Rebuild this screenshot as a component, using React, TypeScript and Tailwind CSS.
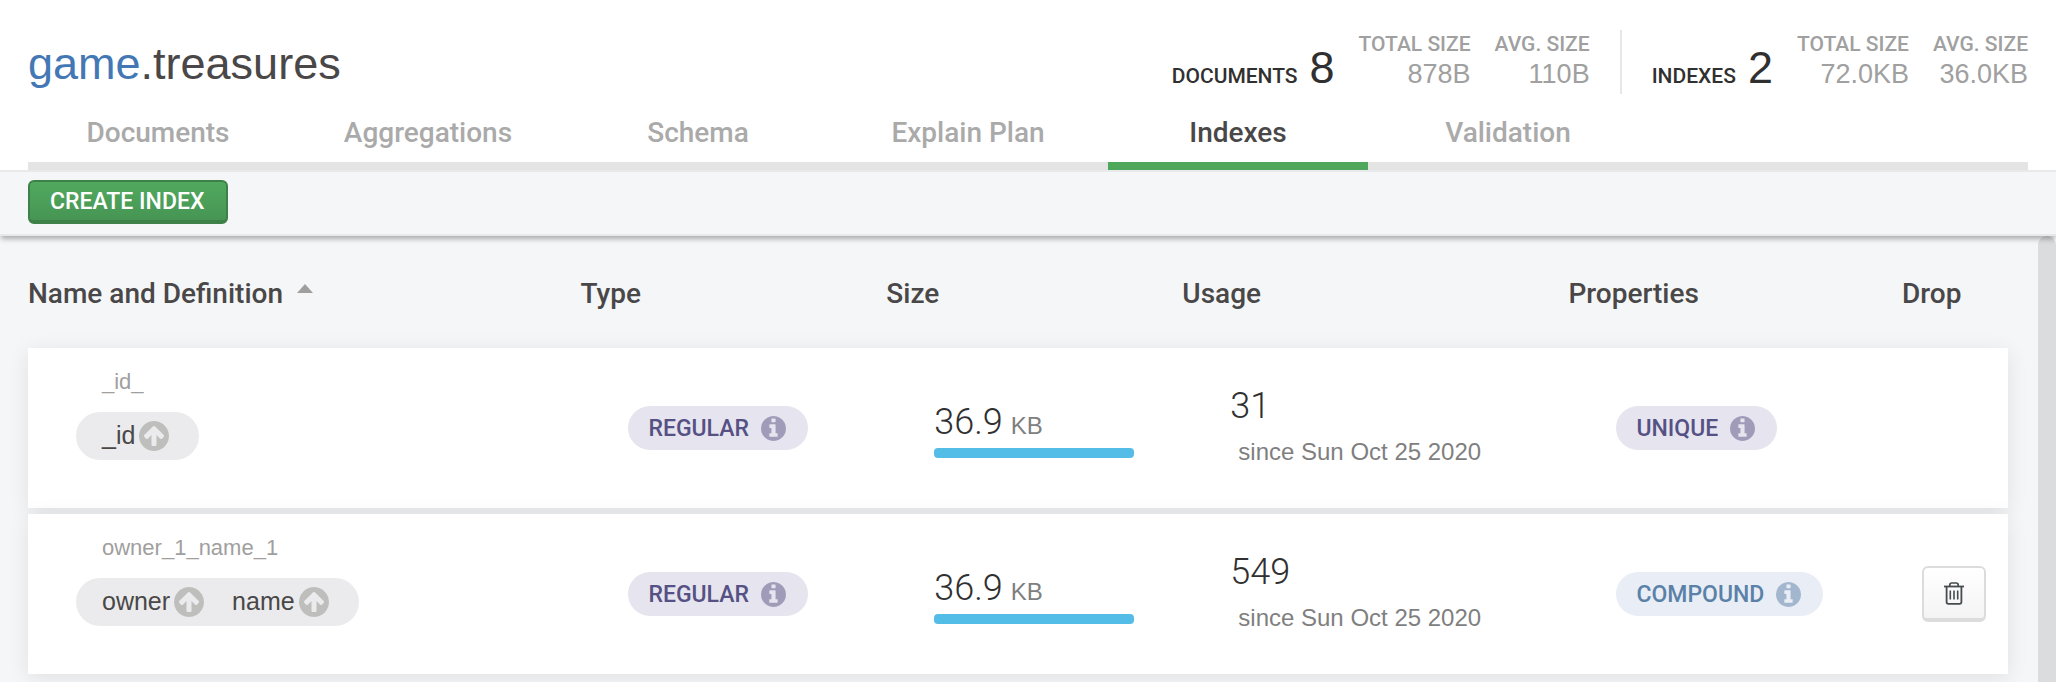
import React from 'react';

type Tone = 'violet' | 'blue';

interface IndexRow {
  name: string;
  fields: string[];
  size: string;
  unit: string;
  usage: number;
  since: string;
  property: string;
  tone: Tone;
  droppable: boolean;
}

const tabs = ['Documents', 'Aggregations', 'Schema', 'Explain Plan', 'Indexes', 'Validation'];

const rows: IndexRow[] = [
  {
    name: '_id_',
    fields: ['_id'],
    size: '36.9',
    unit: 'KB',
    usage: 31,
    since: 'since Sun Oct 25 2020',
    property: 'UNIQUE',
    tone: 'violet',
    droppable: false,
  },
  {
    name: 'owner_1_name_1',
    fields: ['owner', 'name'],
    size: '36.9',
    unit: 'KB',
    usage: 549,
    since: 'since Sun Oct 25 2020',
    property: 'COMPOUND',
    tone: 'blue',
    droppable: true,
  },
];

const MEDIUM = "font-['Roboto',sans-serif] font-medium";

function Stat({ label, value }: { label: string; value: string }) {
  return (
    <div className="flex flex-col items-end text-[#a0a0a0]">
      <span className={`${MEDIUM} text-[21px] leading-[28px]`}>{label}</span>
      <span className="text-[27px] leading-[32px]">{value}</span>
    </div>
  );
}

function StatGroup({ label, count, total, avg }: { label: string; count: number; total: string; avg: string }) {
  return (
    <div className="flex gap-6 pt-1 [align-items:last_baseline]">
      <div className="flex items-baseline gap-3 leading-[44px] text-[#313030]">
        <span className={`${MEDIUM} text-[21px]`}>{label}</span>
        <span className="text-[45px]">{count}</span>
      </div>
      <Stat label="TOTAL SIZE" value={total} />
      <Stat label="AVG. SIZE" value={avg} />
    </div>
  );
}

function InfoIcon({ className }: { className: string }) {
  return (
    <svg viewBox="128 128 1536 1536" className={className} fill="currentColor" aria-hidden="true">
      <path d="M1152 1376v-160q0-14-9-23t-23-9h-96v-512q0-14-9-23t-23-9h-320q-14 0-23 9t-9 23v160q0 14 9 23t23 9h96v320h-96q-14 0-23 9t-9 23v160q0 14 9 23t23 9h448q14 0 23-9t9-23zM1024 480v-160q0-14-9-23t-23-9h-192q-14 0-23 9t-9 23v160q0 14 9 23t23 9h192q14 0 23-9t9-23zM1664 896q0 209-103 385.5t-279.5 279.5-385.5 103-385.5-103-279.5-279.5-103-385.5 103-385.5 279.5-279.5 385.5-103 385.5 103 279.5 279.5 103 385.5z" />
    </svg>
  );
}

function ArrowUpIcon() {
  return (
    <svg viewBox="128 128 1536 1536" className="size-[30px] text-[#bebfbd]" fill="currentColor" aria-hidden="true">
      <path d="M1412 895q0-27-18-45l-362-362-91-91q-18-18-45-18t-45 18l-91 91-362 362q-18 18-18 45t18 45l91 91q18 18 45 18t45-18l189-189v502q0 26 19 45t45 19h128q26 0 45-19t19-45v-502l189 189q19 19 45 19t45-19l91-91q18-18 18-45zM1664 896q0 209-103 385.5t-279.5 279.5-385.5 103-385.5-103-279.5-279.5-103-385.5 103-385.5 279.5-279.5 385.5-103 385.5 103 279.5 279.5 103 385.5z" />
    </svg>
  );
}

function TrashIcon() {
  return (
    <svg viewBox="0 0 20 23" className="h-[23px] w-5" fill="none" stroke="#464c4f" aria-hidden="true">
      <path d="M0 4.5h20" strokeWidth="1.8" />
      <path d="M5.8 4.2V3q0-2 2-2h4.4q2 0 2 2v1.2" strokeWidth="1.7" />
      <path d="M2.6 4.8V20q0 1.8 1.8 1.8h11.2q1.8 0 1.8-1.8V4.8" strokeWidth="1.8" />
      <path d="M6.3 8.4v9.2M10 8.4v9.2M13.7 8.4v9.2" strokeWidth="1.6" />
    </svg>
  );
}

function Badge({ label, tone }: { label: string; tone: Tone }) {
  const colors = tone === 'violet' ? 'bg-[#e6e4ee] text-[#555184]' : 'bg-[#e9edf5] text-[#5a81a8]';
  const icon = tone === 'violet' ? 'text-[#9f9bb9]' : 'text-[#a2b7ce]';
  return (
    <span className={`inline-flex h-11 items-center gap-3 rounded-full pr-[22px] pl-5 align-middle ${MEDIUM} text-[23px] ${colors}`}>
      <span className="pt-0.5">{label}</span>
      <InfoIcon className={`size-[25px] ${icon}`} />
    </span>
  );
}

export default function App() {
  return (
    <div className="flex min-h-screen flex-col bg-[#f5f6f8] font-['Liberation_Sans',Arial,sans-serif] text-[#494747]">
      <header className="bg-white px-7">
        <div className="flex h-[102px] items-center justify-between">
          <h1 className="pt-[26px] text-[45px] leading-[52px]">
            <a href="#game" className="text-[#4378b5]">game</a>.treasures
          </h1>
          <div className="flex items-center gap-[30px] pt-[22px]">
            <StatGroup label="DOCUMENTS" count={8} total="878B" avg="110B" />
            <div className="h-16 w-0.5 bg-[#e7e7e8]" />
            <StatGroup label="INDEXES" count={2} total="72.0KB" avg="36.0KB" />
          </div>
        </div>
        <nav className="flex gap-2.5 bg-[linear-gradient(to_top,#e4e4e4_8px,transparent_8px)]">
          {tabs.map((tab) => (
            <button
              key={tab}
              type="button"
              className={
                tab === 'Indexes'
                  ? `w-[260px] border-b-8 border-[#4fa75c] pt-0.5 text-[#494747] ${MEDIUM} text-[28px] leading-[58px]`
                  : `w-[260px] border-b-8 border-transparent pt-0.5 text-[#aaa] ${MEDIUM} text-[28px] leading-[58px]`
              }
            >
              {tab}
            </button>
          ))}
        </nav>
      </header>

      <div className="relative flex h-[66px] items-center border-y-2 border-[#e7e9eb] px-7 pb-0.5 shadow-[0_4px_5px_-1px_rgba(0,0,0,0.3)]">
        <button
          type="button"
          className={`h-11 rounded-md border-2 border-b-4 border-[#3d8149] bg-linear-to-b from-[#50a95e] to-[#479554] pt-0.5 pr-[22px] pl-5 text-white ${MEDIUM} text-[23px] leading-[36px]`}
        >
          CREATE INDEX
        </button>
      </div>

      <div className="flex flex-1">
        <main className="flex-1 pr-[30px] pl-7">
          <table className="w-full table-fixed border-separate border-spacing-x-0 border-spacing-y-1.5">
            <thead>
              <tr className={`h-[100px] text-left ${MEDIUM} text-[28px]`}>
                <th className="w-[27.9%] pt-[3px] font-medium">
                  <span className="flex items-center gap-3.5">
                    Name and Definition
                    <svg viewBox="0 0 16 9" className="mb-2.5 h-[9px] w-4" fill="#a09f9e" aria-hidden="true">
                      <path d="M8 0l8 9H0z" />
                    </svg>
                  </span>
                </th>
                <th className="w-[15.45%] pt-[3px] font-medium">Type</th>
                <th className="w-[14.95%] pt-[3px] font-medium">Size</th>
                <th className="w-[19.5%] pt-[3px] font-medium">Usage</th>
                <th className="w-[16.85%] pt-[3px] font-medium">Properties</th>
                <th className="pt-[3px] font-medium">Drop</th>
              </tr>
            </thead>
            <tbody>
              {rows.map((row) => (
                <tr key={row.name} className="h-40 bg-white shadow-[0_4px_20px_rgba(0,0,0,0.09)]">
                  <td className="pt-5 pl-12 align-top">
                    <div className="mb-4 pl-[26px] text-[22px] leading-[28px] text-[#a09f9e]">{row.name}</div>
                    <div className="inline-flex h-12 items-center gap-7 rounded-full bg-[#ebebed] pr-[30px] pl-[26px] align-top text-[25px]">
                      {row.fields.map((field) => (
                        <span key={field} className="flex items-center gap-1">
                          {field}
                          <ArrowUpIcon />
                        </span>
                      ))}
                    </div>
                  </td>
                  <td className="pl-12 align-middle">
                    <Badge label="REGULAR" tone="violet" />
                  </td>
                  <td className="pl-12 align-middle">
                    <div className="flex items-baseline gap-2 pb-0.5">
                      <span className="font-['Roboto',sans-serif] text-[36px] leading-[48px] font-light text-[#313030]">{row.size}</span>
                      <span className="text-[24px] leading-none text-[#807f7f]">{row.unit}</span>
                    </div>
                    <div className="h-2.5 w-[200px] rounded bg-[#54bde7]" />
                  </td>
                  <td className="pl-12 align-middle">
                    <div className="font-['Roboto',sans-serif] text-[36px] leading-[48px] font-light text-[#313030]">{row.usage}</div>
                    <div className="pl-2 text-[24px] leading-[44px] text-[#807f7f]">{row.since}</div>
                  </td>
                  <td className="pl-12 align-middle">
                    <Badge label={row.property} tone={row.tone} />
                  </td>
                  <td className="pl-5 align-middle">
                    {row.droppable && (
                      <button
                        type="button"
                        aria-label="Drop index"
                        className="flex h-14 w-16 items-center justify-center rounded-md border-2 border-b-4 border-[#dcdcdc] bg-linear-to-b from-white to-[#f4f4f4]"
                      >
                        <TrashIcon />
                      </button>
                    )}
                  </td>
                </tr>
              ))}
            </tbody>
          </table>
        </main>
        <div className="w-[18px] rounded-t-full bg-[#dbdcde]" />
      </div>
    </div>
  );
}
